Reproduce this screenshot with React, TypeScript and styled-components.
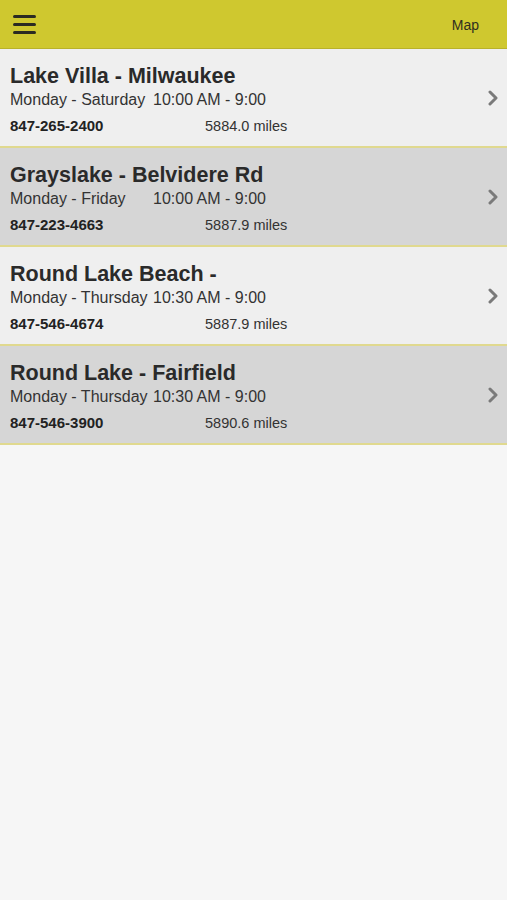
import styled, { createGlobalStyle } from 'styled-components'

type Store = {
  name: string
  days: string
  hours: string
  phone: string
  miles: string
}

const stores: Store[] = [
  {
    name: 'Lake Villa - Milwaukee',
    days: 'Monday - Saturday',
    hours: '10:00 AM - 9:00',
    phone: '847-265-2400',
    miles: '5884.0 miles',
  },
  {
    name: 'Grayslake - Belvidere Rd',
    days: 'Monday - Friday',
    hours: '10:00 AM - 9:00',
    phone: '847-223-4663',
    miles: '5887.9 miles',
  },
  {
    name: 'Round Lake Beach -',
    days: 'Monday - Thursday',
    hours: '10:30 AM - 9:00',
    phone: '847-546-4674',
    miles: '5887.9 miles',
  },
  {
    name: 'Round Lake - Fairfield',
    days: 'Monday - Thursday',
    hours: '10:30 AM - 9:00',
    phone: '847-546-3900',
    miles: '5890.6 miles',
  },
]

const GlobalStyle = createGlobalStyle`
  html, body {
    margin: 0;
    padding: 0;
    background: #f6f6f6;
    font-family: 'Liberation Sans', Arial, sans-serif;
  }
`

const Page = styled.div`
  width: 507px;
  min-height: 900px;
  background: #f6f6f6;
`

const Toolbar = styled.header`
  height: 48px;
  display: flex;
  align-items: center;
  justify-content: space-between;
  padding: 0 28px 0 13px;
  background: #cfc82f;
  border-bottom: 1px solid #b9b22a;
`

const MenuButton = styled.button`
  display: flex;
  flex-direction: column;
  gap: 5px;
  width: 23px;
  padding: 0;
  background: transparent;
  border: none;
  span {
    display: block;
    height: 3px;
    border-radius: 2px;
    background: #2b2b22;
  }
`

const MapLink = styled.span`
  font-size: 14px;
  color: #2f2f20;
  padding-top: 2px;
`

const Row = styled.div<{ shaded: boolean }>`
  box-sizing: border-box;
  height: 99px;
  display: flex;
  padding: 0 8px 0 10px;
  background: ${({ shaded }) => (shaded ? '#d6d6d6' : '#efefef')};
  border-bottom: 2px solid #e0d98f;
  svg {
    align-self: center;
  }
`

const Info = styled.div`
  flex: 1;
  display: flex;
  flex-direction: column;
  padding-top: 15px;
`

const Title = styled.div`
  font-size: 21.5px;
  line-height: 24px;
  font-weight: bold;
  color: #2a2a2a;
`

const Hours = styled.div`
  display: flex;
  font-size: 16px;
  line-height: 23px;
  color: #333;
  span:first-child {
    min-width: 138px;
    margin-right: 5px;
  }
`

const Meta = styled.div`
  display: flex;
  font-size: 14.5px;
  line-height: 20px;
  color: #333;
  margin-top: 5px;
`

const Phone = styled.span`
  width: 195px;
  font-size: 15px;
  font-weight: bold;
  color: #222;
`

const Chevron = () => (
  <svg width="12" height="16" viewBox="0 0 12 16">
    <path
      d="M3 2 L9 8 L3 14"
      fill="none"
      stroke="#7a7a7a"
      strokeWidth="3"
      strokeLinecap="round"
      strokeLinejoin="round"
    />
  </svg>
)

export default function App() {
  return (
    <Page>
      <GlobalStyle />
      <Toolbar>
        <MenuButton aria-label="menu">
          <span />
          <span />
          <span />
        </MenuButton>
        <MapLink>Map</MapLink>
      </Toolbar>
      {stores.map((s, i) => (
        <Row key={s.phone} shaded={i % 2 === 1}>
          <Info>
            <Title>{s.name}</Title>
            <Hours>
              <span>{s.days}</span>
              <span>{s.hours}</span>
            </Hours>
            <Meta>
              <Phone>{s.phone}</Phone>
              <span>{s.miles}</span>
            </Meta>
          </Info>
          <Chevron />
        </Row>
      ))}
    </Page>
  )
}
